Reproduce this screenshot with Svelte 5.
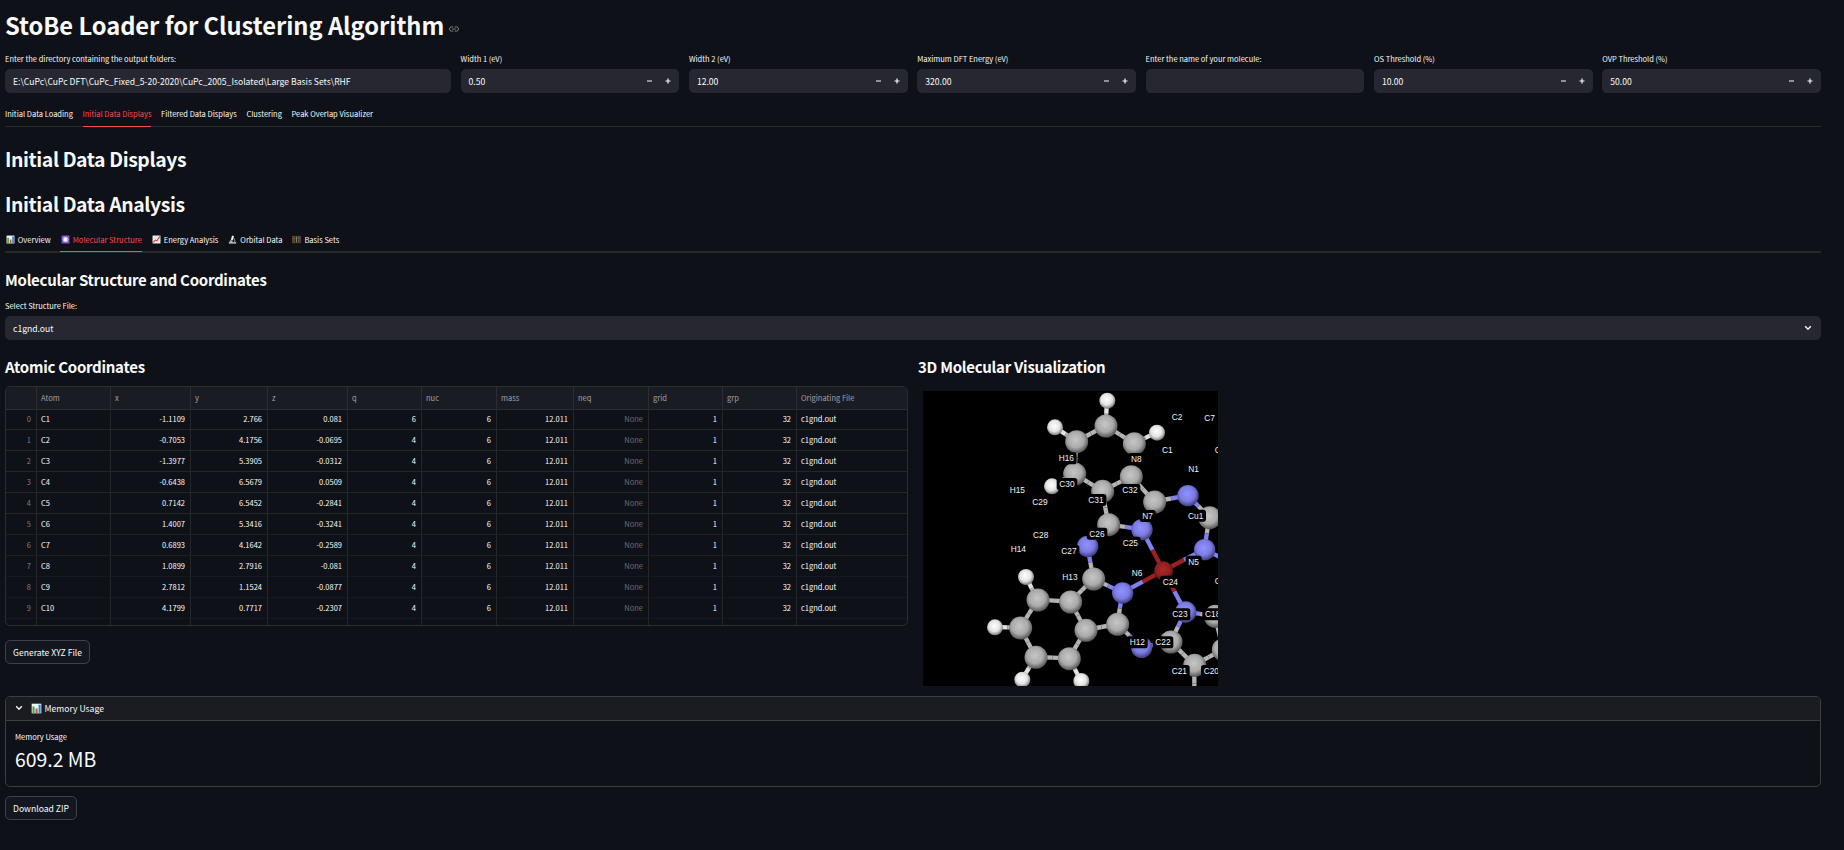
<script>
  const fields = [
    { label: 'Enter the directory containing the output folders:', value: 'E:\\CuPc\\CuPc DFT\\CuPc_Fixed_5-20-2020\\CuPc_2005_Isolated\\Large Basis Sets\\RHF', step: false },
    { label: 'Width 1 (eV)', value: '0.50', step: true },
    { label: 'Width 2 (eV)', value: '12.00', step: true },
    { label: 'Maximum DFT Energy (eV)', value: '320.00', step: true },
    { label: 'Enter the name of your molecule:', value: '', step: false },
    { label: 'OS Threshold (%)', value: '10.00', step: true },
    { label: 'OVP Threshold (%)', value: '50.00', step: true }
  ];
  const tabs = ['Initial Data Loading', 'Initial Data Displays', 'Filtered Data Displays', 'Clustering', 'Peak Overlap Visualizer'];
  const subtabs = [
    ['chart', 'Overview'],
    ['atom', 'Molecular Structure'],
    ['trend', 'Energy Analysis'],
    ['scope', 'Orbital Data'],
    ['abacus', 'Basis Sets']
  ];
  const heads = ['', 'Atom', 'x', 'y', 'z', 'q', 'nuc', 'mass', 'neq', 'grid', 'grp', 'Originating File'];
  const coords = [
    ['-1.1109', '2.766', '0.081', '6'],
    ['-0.7053', '4.1756', '-0.0695', '4'],
    ['-1.3977', '5.3905', '-0.0312', '4'],
    ['-0.6438', '6.5679', '0.0509', '4'],
    ['0.7142', '6.5452', '-0.2841', '4'],
    ['1.4007', '5.3416', '-0.3241', '4'],
    ['0.6893', '4.1642', '-0.2589', '4'],
    ['1.0899', '2.7916', '-0.081', '4'],
    ['2.7812', '1.1524', '-0.0877', '4'],
    ['4.1799', '0.7717', '-0.2307', '4']
  ];
  const rows = coords.map((c, i) => [String(i), 'C' + (i + 1), ...c, '6', '12.011', 'None', '1', '32', 'c1gnd.out']);

  const atoms = {
    h1: ['H', 576, 136], h2: ['H', 419, 216], h3: ['H', 725, 232], h4: ['H', 410, 393],
    h5: ['H', 332, 665], h6: ['H', 239, 816], h7: ['H', 321, 973], h8: ['H', 498, 977],
    a: ['C', 572, 212], b: ['C', 484, 259], c: ['C', 657, 265], d: ['C', 478, 356],
    e: ['C', 648, 364], f: ['C', 562, 408], g: ['C', 718, 440], h: ['C', 580, 508],
    i: ['C', 883, 487], j: ['C', 535, 671], k: ['C', 466, 740], l: ['C', 368, 734],
    m: ['C', 316, 818], n: ['C', 362, 906], o: ['C', 462, 910], p: ['C', 512, 825],
    q: ['C', 607, 807], r: ['C', 900, 783], s: ['C', 767, 860], t: ['C', 838, 930],
    u: ['C', 924, 883],
    n1: ['N', 818, 421], n2: ['N', 680, 523], n3: ['N', 517, 573], n4: ['N', 868, 583],
    n5: ['N', 622, 713], n6: ['N', 679, 876], n7: ['N', 811, 770],
    cu: ['Cu', 745, 647],
    x1: ['N', 960, 629], x2: ['C', 838, 1040]
  };
  const radius = { H: 24, C: 34.5, N: 32, Cu: 29 };
  const tint = { H: '#e2e2e2', C: '#b4b4b4', N: '#8181ee', Cu: '#9c2020' };
  const links = ['h1 a', 'h2 b', 'h3 c', 'h4 d', 'a b', 'a c', 'b d', 'd f', 'e f', 'e g', 'f h', 'g n1', 'n1 i', 'i n4', 'h n2', 'h n3', 'n3 j', 'n2 cu', 'n4 cu', 'n5 cu', 'n7 cu', 'j n5', 'j k', 'k l', 'l h5', 'l m', 'm h6', 'm n', 'n h7', 'n o', 'o h8', 'o p', 'p k', 'p q', 'q n5', 'q n6', 'n6 s', 's n7', 'n7 r', 'r u', 's t', 't u', 't x2', 'n4 x1'];
  const bonds = links.map((l) => {
    const [p, q] = l.split(' ').map((k) => atoms[k]);
    return { p, q, mx: (p[1] + q[1]) / 2, my: (p[2] + q[2]) / 2 };
  });
  const tags = [
    ['C2', 786, 186], ['C7', 884, 189], ['C1', 757, 285], ['C6', 915, 285], ['N1', 836, 343],
    ['H16', 454, 310], ['N8', 664, 312], ['H15', 307, 405], ['C30', 456, 387], ['C32', 645, 405],
    ['C29', 375, 441], ['C31', 543, 435], ['N7', 698, 483], ['Cu1', 842, 482], ['C28', 377, 541],
    ['C26', 546, 536], ['C25', 646, 563], ['H14', 310, 582], ['C27', 462, 588], ['N5', 836, 620],
    ['N6', 666, 655], ['H13', 465, 666], ['C24', 766, 680], ['C17', 922, 678], ['C23', 795, 778],
    ['C18', 893, 778], ['H12', 667, 862], ['C22', 744, 862], ['C21', 793, 948], ['C20', 889, 948],
    ['C3', 738, 98]
  ];
</script>

{#snippet icon(kind)}
  <svg class="emoji" viewBox="0 0 16 16" aria-hidden="true">
    {#if kind === 'chart'}
      <rect x="1" y="1" width="14" height="14" fill="#f2f4f5" />
      <rect x="2.2" y="5" width="3" height="10" fill="#35a94b" />
      <rect x="6.6" y="8" width="3" height="7" fill="#e8452f" />
      <rect x="11" y="2.5" width="3" height="12.5" fill="#2d83d6" />
    {:else if kind === 'atom'}
      <rect x="1" y="1" width="14" height="14" rx="1" fill="#7d55d4" />
      <g fill="none" stroke="#fff" stroke-width="1">
        <ellipse cx="8" cy="8" rx="4.8" ry="2" />
        <ellipse cx="8" cy="8" rx="4.8" ry="2" transform="rotate(60 8 8)" />
        <ellipse cx="8" cy="8" rx="4.8" ry="2" transform="rotate(120 8 8)" />
      </g>
      <circle cx="8" cy="8" r="2.6" fill="#fff" />
    {:else if kind === 'trend'}
      <rect x="1" y="1" width="14" height="14" fill="#f2f4f5" />
      <path d="M1 5.5h14M1 10.5h14M5.5 1v14M10.5 1v14" stroke="#c3ccd2" stroke-width=".8" />
      <path d="M2 13l4-4 2.5 1.5L14 2.5" fill="none" stroke="#e23b2e" stroke-width="1.9" />
    {:else if kind === 'scope'}
      <path d="M1.5 14.2h13M3 11h5" stroke="#e8eaec" stroke-width="2.2" />
      <path d="M9 1.5L6.8 9" stroke="#eef0f2" stroke-width="3.6" />
      <path d="M9.5 5.5c3.5 1.5 3.5 6 1 8.5" fill="none" stroke="#8c969e" stroke-width="1.8" />
    {:else}
      <rect x="0" y="1.5" width="16" height="13" fill="#743c2b" />
      <rect x="1.5" y="3" width="13" height="10" fill="#2d2522" />
      <path d="M3.6 3v10" stroke="#b8493a" stroke-width="1.8" />
      <path d="M8 3v10" stroke="#3fa557" stroke-width="1.8" />
      <path d="M12.2 3v10" stroke="#3a87bd" stroke-width="1.8" stroke-dasharray="4 1" />
      <path d="M1 6.5h14" stroke="#9b6a3d" stroke-width=".8" />
    {/if}
  </svg>
{/snippet}

<main>
  <h1>
    <span>StoBe Loader for Clustering Algorithm</span>
    <svg class="link" viewBox="0 0 20 12" aria-hidden="true">
      <path d="M8.5 1.8H5.2a4.2 4.2 0 0 0 0 8.4h3.3M11.5 1.8h3.3a4.2 4.2 0 0 1 0 8.4h-3.3M6.5 6h7" fill="none" stroke="#85878c" stroke-width="1.9" />
    </svg>
  </h1>

  <div class="fields">
    {#each fields as f}
      <div class="field">
        <div class="label">{f.label}</div>
        <div class="box">
          <span>{f.value}</span>
          {#if f.step}
            <svg class="step" viewBox="0 0 24 8" aria-hidden="true">
              <path d="M0 4h5M18.5 4h5M21 1.5v5" fill="none" stroke="#fafafa" stroke-width="1.2" />
            </svg>
          {/if}
        </div>
      </div>
    {/each}
  </div>

  <nav class="tabs first">
    {#each tabs as t, i}
      <span class="tab" class:on={i === 1}>{t}</span>
    {/each}
  </nav>

  <h2 class="ha">Initial Data Displays</h2>
  <h2 class="hb">Initial Data Analysis</h2>

  <nav class="tabs second">
    {#each subtabs as [kind, t], i}
      <span class="tab" class:on={i === 1}>{@render icon(kind)}{t}</span>
    {/each}
  </nav>

  <h3 class="hc">Molecular Structure and Coordinates</h3>
  <div class="label sel">Select Structure File:</div>
  <div class="box select">
    <span>c1gnd.out</span>
    <svg class="chev" viewBox="0 0 8 6" aria-hidden="true"><path d="M1.2 1.3L4 4.2 6.8 1.3" fill="none" stroke="#fafafa" stroke-width="1.4" /></svg>
  </div>

  <div class="cols">
    <section>
      <h3>Atomic Coordinates</h3>
      <div class="table">
        <div class="row head">
          {#each heads as h}<span>{h}</span>{/each}
        </div>
        {#each rows as r, i}
          <div class="row" class:mid={i > 4 && i < 7} class:low={i >= 7}>
            {#each r as c}<span class:none={c === 'None'}>{c}</span>{/each}
          </div>
        {/each}
        <div class="row rest">
          {#each heads as h}<span></span>{/each}
        </div>
      </div>
      <button>Generate XYZ File</button>
    </section>

    <section>
      <h3>3D Molecular Visualization</h3>
      <svg class="mol" viewBox="24 108 885 885">
        <defs>
          <radialGradient id="gH" cx=".46" cy=".42" r=".58"><stop offset="0" stop-color="#fff" /><stop offset=".6" stop-color="#e3e3e3" /><stop offset="1" stop-color="#777" /></radialGradient>
          <radialGradient id="gC" cx=".46" cy=".42" r=".58"><stop offset="0" stop-color="#c6c6c6" /><stop offset=".6" stop-color="#aaaaaa" /><stop offset="1" stop-color="#555" /></radialGradient>
          <radialGradient id="gN" cx=".46" cy=".42" r=".58"><stop offset="0" stop-color="#9292ff" /><stop offset=".6" stop-color="#7b7be4" /><stop offset="1" stop-color="#3d3d78" /></radialGradient>
          <radialGradient id="gCu" cx=".46" cy=".42" r=".58"><stop offset="0" stop-color="#ac2929" /><stop offset=".6" stop-color="#942020" /><stop offset="1" stop-color="#4b1010" /></radialGradient>
        </defs>
        <rect x="24" y="108" width="885" height="885" fill="#000" />
        <g stroke-width="13">
          {#each bonds as b}
            <line x1={b.p[1]} y1={b.p[2]} x2={b.mx} y2={b.my} stroke={tint[b.p[0]]} />
            <line x1={b.mx} y1={b.my} x2={b.q[1]} y2={b.q[2]} stroke={tint[b.q[0]]} />
          {/each}
        </g>
        {#each Object.values(atoms) as [k, x, y]}
          <circle cx={x + 1} cy={y + 1} r={radius[k]} fill="url(#g{k})" />
        {/each}
        {#each tags as [t, x, y]}
          {@const w = t.length === 3 ? 62 : 48}
          <rect x={x - w / 2} y={y - 18} width={w} height="36" rx="8" fill="#000" />
          <text {x} y={y + 9}>{t}</text>
        {/each}
      </svg>
    </section>
  </div>

  <div class="expander">
    <div class="summary">
      <svg class="chev" viewBox="0 0 8 6" aria-hidden="true"><path d="M1.2 1.3L4 4.2 6.8 1.3" fill="none" stroke="#fafafa" stroke-width="1.3" /></svg>
      {@render icon('chart')}
      <span>Memory Usage</span>
    </div>
    <div class="body">
      <div class="label">Memory Usage</div>
      <div class="metric">609.2 MB</div>
    </div>
  </div>
  <button class="zip">Download ZIP</button>
</main>

<style>
  :global(body) { background: #0e1117; }
  main {
    box-sizing: border-box;
    width: 1844px;
    height: 850px;
    padding: 0 23px 0 5px;
    overflow: hidden;
    background: #0e1117;
    color: #fafafa;
    font-family: "Noto Sans CJK SC", "Open Sans", sans-serif;
    font-size: 8.6px;
    white-space: nowrap;
  }
  h1, h2, h3 { margin: 0; font-weight: 700; }
  h1 { display: flex; align-items: center; gap: 5px; height: 51px; font-size: 23.7px; line-height: 51px; letter-spacing: -.04px; }
  .link { width: 10px; height: 6px; margin-top: 6px; }
  .fields { display: grid; grid-template-columns: 446px repeat(6, 1fr); gap: 9.6px; padding-top: 2px; }
  .label { height: 12px; line-height: 12px; font-size: 7.5px; }
  .fields .label { margin-bottom: 4px; }
  .box { display: flex; align-items: center; justify-content: space-between; height: 24px; padding: 0 8px; border-radius: 5px; background: #262730; line-height: 22px; }
  .select { padding-right: 9px; }
  .step { width: 24px; height: 8px; }
  .tabs { display: flex; box-sizing: border-box; gap: 9.6px; border-bottom: 1px solid #26282e; font-size: 7.5px; letter-spacing: .01px; }
  .first { height: 24px; margin-top: 10px; }
  .second { height: 25px; margin-top: 2px; gap: 9.2px; border-bottom-width: 2px; }
  .tab { display: flex; align-items: center; box-sizing: border-box; height: 24px; padding-bottom: 2px; border-bottom: 1px solid transparent; }
  .second .tab { padding-bottom: 1px; }
  .on { color: #ff4b4b; border-bottom-color: #ff4b4b; }
  .emoji { width: 9px; height: 9px; margin-right: 3px; }
  .tab .emoji { margin: 0 3.2px 0 .6px; }
  h2 { height: 45px; line-height: 45px; font-size: 19.4px; letter-spacing: -.39px; }
  .ha { margin-top: 9px; }
  h3 { font-size: 15px; height: 24px; line-height: 24px; letter-spacing: -.27px; }
  .hc { margin-top: 15px; }
  .sel { margin: 8px 0 4px; }
  .chev { width: 8px; height: 6px; }
  .cols { display: grid; grid-template-columns: 903px 1fr; gap: 10px; margin-top: 15px; height: 341px; }
  .table { box-sizing: border-box; height: 240px; margin-top: 7px; border: 1px solid #2b2d33; border-radius: 5px; overflow: hidden; font-size: 7.5px; }
  .row { display: grid; grid-template-columns: 31px 74px 80px 77px 80px 74px 75px 77px 75px 74px 74px 110px; height: 21px; line-height: 19px; }
  .row span { box-sizing: border-box; padding: 0 5px 0 4px; border-right: 1px solid #23262b; border-bottom: 1px solid #23262b; text-align: right; }
  .row span:nth-child(2), .row span:last-child, .head span { text-align: left; }
  .row span:last-child { border-right: 0; }
  .row span:first-child { color: #7b7d81; }
  .mid span { border-bottom-color: #1d2025; }
  .low span { border-bottom-color: #16191f; }
  .row .none { color: #6a6c70; }
  .head { height: 22px; line-height: 22px; background: #1a1c24; }
  .head span { color: #a0a1a5; border-color: #2b2d34; }
  button { display: block; box-sizing: border-box; height: 24px; margin: 14px 0 0; padding: 0 7px; border: 1px solid #3f4147; border-radius: 5px; background: #131720; color: #fafafa; font: inherit; line-height: 20px; }
  .mol { display: block; width: 295px; height: 295px; margin: 12px 0 0 5px; }
  .mol text { fill: #f2f2f2; font-family: "Liberation Sans", Arial, sans-serif; font-size: 25px; text-anchor: middle; }
  .expander { box-sizing: border-box; height: 91px; border: 1px solid #3b3e43; border-radius: 5px; overflow: hidden; }
  .summary { display: flex; align-items: center; box-sizing: border-box; height: 24px; padding: 0 0 1px 9px; border-bottom: 1px solid #3b3e43; background: #1a1c22; }
  .summary .emoji { width: 11px; height: 11px; margin: 0 2.5px 0 8px; }
  .body { padding: 10px 9px; }
  .metric { height: 32px; font-size: 19.4px; line-height: 32px; }
  .zip { margin-top: 9px; }
</style>
